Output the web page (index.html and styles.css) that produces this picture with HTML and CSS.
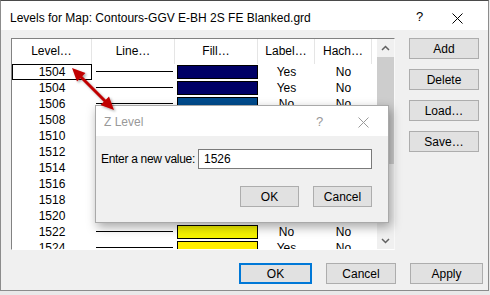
FILE: index.html
```html
<!DOCTYPE html>
<html>
<head>
<meta charset="utf-8">
<link rel="stylesheet" href="styles.css">
</head>
<body>
<div class="stage">
  <div class="window">
    <div class="titlebar">
      <span class="title">Levels for Map: Contours-GGV E-BH 2S FE Blanked.grd</span>
      <span class="help">?</span>
      <span class="close"><svg width="11" height="11" viewBox="0 0 11 11"><path d="M0.5 0.5L10.5 10.5M10.5 0.5L0.5 10.5" stroke="#000" stroke-width="1"/></svg></span>
    </div>
    <div class="body">
      <div class="top">
        <div class="grid">
          <div class="table">
            <div class="row head">
              <div class="c c1">Level…</div>
              <div class="c c2">Line…</div>
              <div class="c c3">Fill…</div>
              <div class="c c4">Label…</div>
              <div class="c c5">Hach…</div>
            </div>
            <div class="row"><div class="c c1 sel">1504</div><div class="c c2"><i class="ln"></i></div><div class="c c3"><i class="sw" style="background:#000066"></i></div><div class="c c4">Yes</div><div class="c c5">No</div></div>
            <div class="row"><div class="c c1">1504</div><div class="c c2"><i class="ln"></i></div><div class="c c3"><i class="sw" style="background:#000066"></i></div><div class="c c4">Yes</div><div class="c c5">No</div></div>
            <div class="row"><div class="c c1">1506</div><div class="c c2"><i class="ln"></i></div><div class="c c3"><i class="sw" style="background:#004b8d"></i></div><div class="c c4">No</div><div class="c c5">No</div></div>
            <div class="row"><div class="c c1">1508</div><div class="c c2"><i class="ln"></i></div><div class="c c3"><i class="sw" style="background:#0d6aa6"></i></div><div class="c c4">No</div><div class="c c5">No</div></div>
            <div class="row"><div class="c c1">1510</div><div class="c c2"><i class="ln"></i></div><div class="c c3"><i class="sw" style="background:#1f8ab8"></i></div><div class="c c4">No</div><div class="c c5">No</div></div>
            <div class="row"><div class="c c1">1512</div><div class="c c2"><i class="ln"></i></div><div class="c c3"><i class="sw" style="background:#35a8a0"></i></div><div class="c c4">No</div><div class="c c5">No</div></div>
            <div class="row"><div class="c c1">1514</div><div class="c c2"><i class="ln"></i></div><div class="c c3"><i class="sw" style="background:#56bf70"></i></div><div class="c c4">Yes</div><div class="c c5">No</div></div>
            <div class="row"><div class="c c1">1516</div><div class="c c2"><i class="ln"></i></div><div class="c c3"><i class="sw" style="background:#88d040"></i></div><div class="c c4">No</div><div class="c c5">No</div></div>
            <div class="row"><div class="c c1">1518</div><div class="c c2"><i class="ln"></i></div><div class="c c3"><i class="sw" style="background:#bfe020"></i></div><div class="c c4">No</div><div class="c c5">No</div></div>
            <div class="row"><div class="c c1">1520</div><div class="c c2"><i class="ln"></i></div><div class="c c3"><i class="sw" style="background:#e6ef00"></i></div><div class="c c4">No</div><div class="c c5">No</div></div>
            <div class="row"><div class="c c1">1522</div><div class="c c2"><i class="ln"></i></div><div class="c c3"><i class="sw" style="background:#f6f400"></i></div><div class="c c4">No</div><div class="c c5">No</div></div>
            <div class="row"><div class="c c1">1524</div><div class="c c2"><i class="ln"></i></div><div class="c c3"><i class="sw" style="background:#ffee00"></i></div><div class="c c4">Yes</div><div class="c c5">No</div></div>
          </div>
          <div class="scroll">
            <div class="arr"><svg width="9" height="6" viewBox="0 0 9 6"><path d="M1 5L4.5 1.5L8 5" fill="none" stroke="#606060" stroke-width="1.5"/></svg></div>
            <div class="thumb"></div>
            <div class="track"></div>
            <div class="arr"><svg width="9" height="6" viewBox="0 0 9 6"><path d="M1 1L4.5 4.5L8 1" fill="none" stroke="#606060" stroke-width="1.5"/></svg></div>
          </div>
        </div>
        <div class="side">
          <button class="btn side-btn">Add</button>
          <button class="btn side-btn">Delete</button>
          <button class="btn side-btn">Load…</button>
          <button class="btn side-btn">Save…</button>
        </div>
      </div>
      <div class="bottom">
        <button class="btn wide default">OK</button>
        <button class="btn mid">Cancel</button>
        <button class="btn wide">Apply</button>
      </div>
    </div>
  </div>

  <div class="zdlg">
    <div class="ztitle">
      <span class="ztext">Z Level</span>
      <span class="zhelp">?</span>
      <span class="zclose"><svg width="11" height="11" viewBox="0 0 11 11"><path d="M0.5 0.5L10.5 10.5M10.5 0.5L0.5 10.5" stroke="#9a9a9a" stroke-width="1"/></svg></span>
    </div>
    <div class="zbody">
      <div class="zrow">
        <span class="zlabel">Enter a new value:</span>
        <div class="zinput">1526</div>
      </div>
      <div class="zbtns">
        <button class="btn zb">OK</button>
        <button class="btn zb">Cancel</button>
      </div>
    </div>
  </div>

  <svg class="arrow" width="490" height="295" viewBox="0 0 490 295">
    <defs>
      <filter id="sh" x="-20%" y="-20%" width="160%" height="160%">
        <feDropShadow dx="1.5" dy="1.5" stdDeviation="1" flood-color="#000" flood-opacity="0.35"/>
      </filter>
    </defs>
    <g filter="url(#sh)" fill="#c00000" stroke="none">
      <path d="M80 76L106 102" stroke="#c00000" stroke-width="3"/>
      <polygon points="72,68 85.5,73 77,81.5"/>
      <polygon points="114,110 100.5,105 109,96.5"/>
    </g>
  </svg>
</div>
</body>
</html>
```

FILE: styles.css
```css
* { box-sizing: border-box; }
html, body { margin: 0; padding: 0; }
body {
  width: 490px;
  height: 295px;
  background: #e9e9e9;
  font-family: "Liberation Sans", Arial, sans-serif;
  font-size: 12px;
  color: #000;
  overflow: hidden;
}
.stage { position: relative; width: 490px; height: 295px; }

.window {
  width: 489px;
  height: 291px;
  border: 1px solid #8c8c8c;
  border-top-color: #4a4a4a;
  background: #f0f0f0;
  display: flex;
  flex-direction: column;
}
.titlebar {
  height: 29px;
  background: #fff;
  display: flex;
  align-items: center;
  padding-left: 9px;
}
.title { flex: 1; padding-top: 4px; white-space: nowrap; }
.help { width: 20px; padding-top: 2px; font-size: 13px; }
.close { width: 30px; padding-top: 5px; display: flex; margin-left: 16px; margin-right: 6px; }

.body {
  flex: 1;
  padding: 8px 5px 0 10px;
  display: flex;
  flex-direction: column;
}
.top { display: flex; }
.grid {
  width: 384px;
  height: 212px;
  border: 1px solid;
  border-color: #828282 #f8f8f8 #ffffff #828282;
  background: #fff;
  display: flex;
  overflow: hidden;
}
.table { width: 365px; overflow: hidden; }
.row { display: flex; height: 16px; line-height: 16px; }
.row.head { height: 25px; line-height: 25px; }
.c { text-align: center; white-space: nowrap; position: relative; }
.c1 { width: 80px; }
.c2 { width: 83px; }
.c3 { width: 83px; }
.c4 { width: 57px; }
.c5 { width: 57px; }
.head .c { border-right: 1px solid #e5e5e5; }
.sel { border: 1px solid #000; line-height: 14px; }
.ln {
  position: absolute;
  left: 4px;
  top: 7px;
  width: 77px;
  height: 1px;
  background: #000;
}
.sw {
  position: absolute;
  left: 2px;
  top: 1px;
  width: 81px;
  height: 14px;
  border: 1px solid #000;
}

.scroll {
  width: 17px;
  display: flex;
  flex-direction: column;
  background: #f0f0f0;
}
.arr {
  height: 17px;
  display: flex;
  align-items: center;
  justify-content: center;
}
.thumb { height: 107px; background: #cdcdcd; margin: 1px 0 0 0; }
.track { flex: 1; }

.side {
  margin-left: 14px;
  display: flex;
  flex-direction: column;
  gap: 10px;
}
.btn {
  font-family: inherit;
  font-size: 12px;
  color: #000;
  background: #e1e1e1;
  border: 1px solid #adadad;
  padding: 0;
  height: 21px;
  border-radius: 0;
  white-space: nowrap;
}
.side-btn { width: 70px; }
.bottom {
  display: flex;
  justify-content: flex-end;
  gap: 14px;
  margin-top: 13px;
}
.wide { width: 73px; }
.mid { width: 70px; }
.default { border: 2px solid #0078d7; }

.zdlg {
  position: absolute;
  left: 95px;
  top: 105px;
  width: 294px;
  height: 118px;
  border: 1px solid #a9a9a9;
  background: #f0f0f0;
  box-shadow: 2px 4px 10px rgba(0, 0, 0, 0.35);
  display: flex;
  flex-direction: column;
}
.ztitle {
  height: 30px;
  background: #fff;
  display: flex;
  align-items: center;
  padding-left: 8px;
  color: #999;
}
.ztext { flex: 1; font-size: 12px; padding-top: 2px; }
.zhelp { width: 20px; font-size: 13px; color: #999; padding-top: 1px; }
.zclose { width: 30px; display: flex; margin-left: 22px; padding-top: 3px; }
.zbody { padding: 13px 16px 0 5px; display: flex; flex-direction: column; }
.zrow { display: flex; align-items: center; justify-content: space-between; }
.zlabel { white-space: nowrap; flex-shrink: 0; letter-spacing: -0.3px; }
.zinput {
  width: 174px;
  flex-shrink: 0;
  height: 20px;
  background: #fff;
  border: 1px solid #7a7a7a;
  padding-left: 5px;
  line-height: 18px;
}
.zbtns { display: flex; justify-content: flex-end; gap: 14px; margin-top: 17px; }
.zb { width: 59px; }

.arrow { position: absolute; left: 0; top: 0; pointer-events: none; }
```
